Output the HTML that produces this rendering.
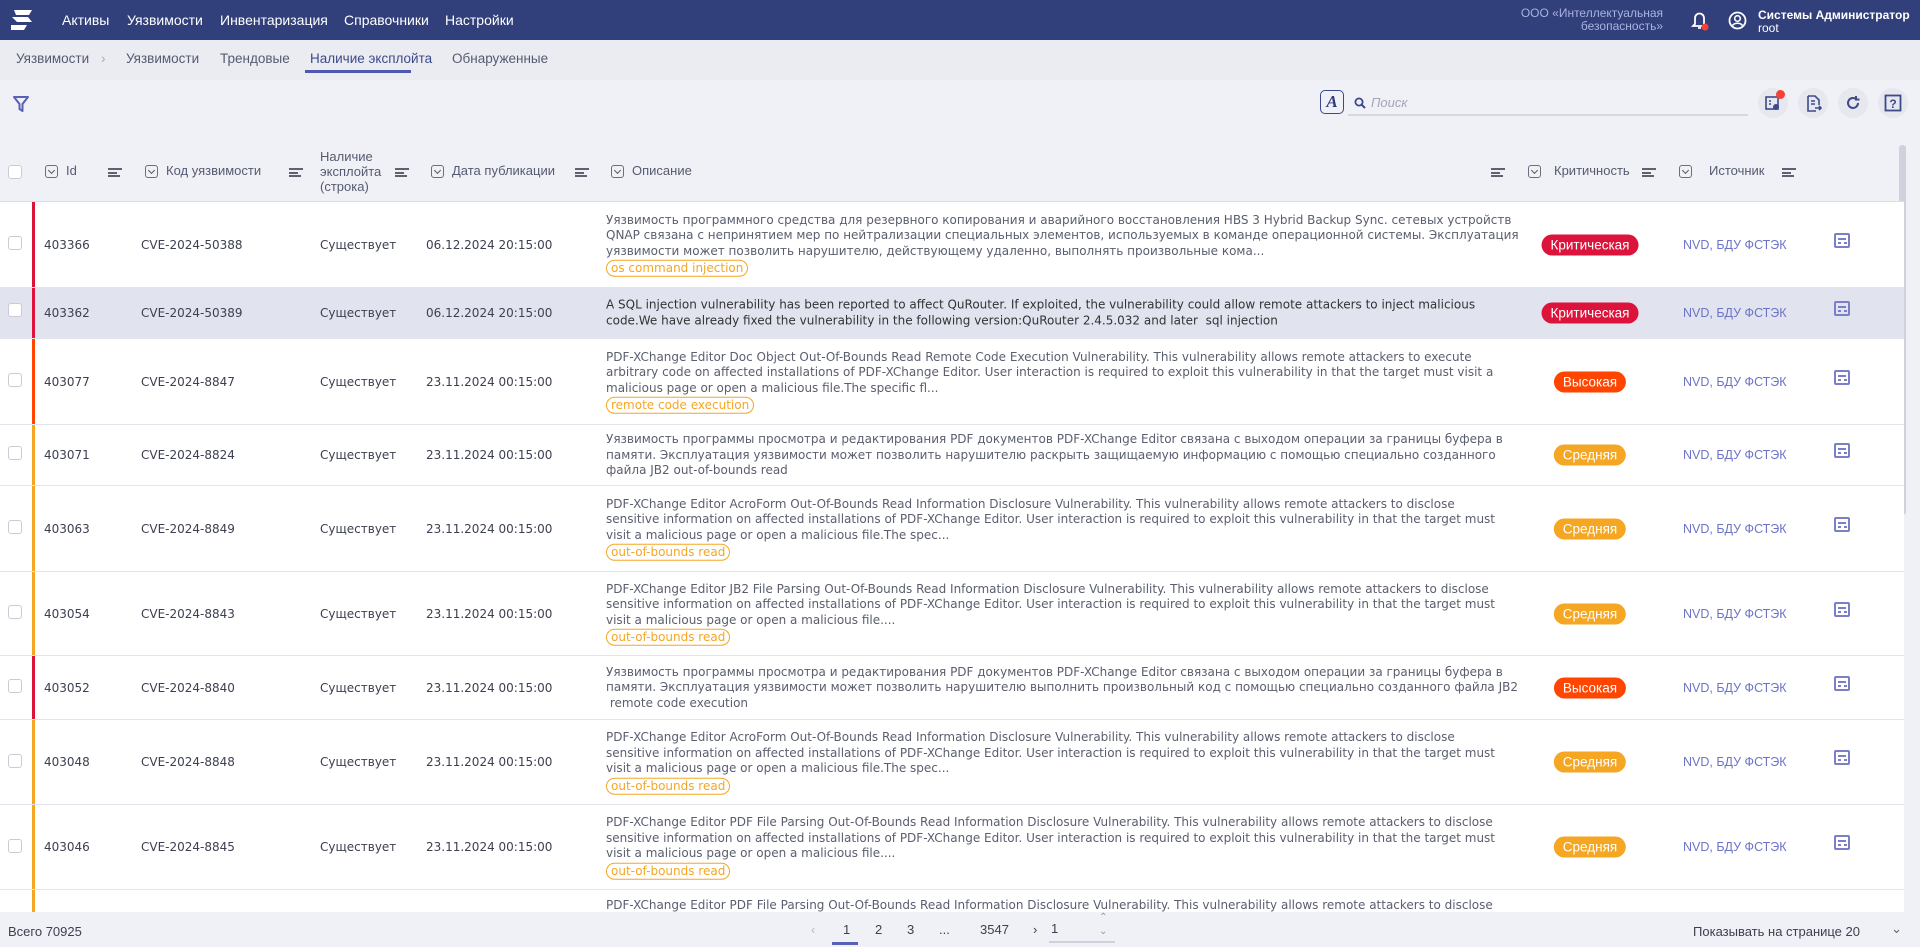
<!DOCTYPE html>
<html><head><meta charset="utf-8">
<style>
*{box-sizing:border-box;margin:0;padding:0}
body{width:1920px;height:947px;overflow:hidden;background:#f0f1f6;font-family:"DejaVu Sans","Liberation Sans",sans-serif;color:#3c4050;font-size:12px;position:relative}
.nav{position:absolute;left:0;top:0;width:1920px;height:40px;background:#313f7a;color:#fff;font-family:"Liberation Sans",sans-serif}
.nav .m{position:absolute;top:12px;font-size:14px}
.sub{position:absolute;top:40px;left:0;width:1920px;height:40px;background:#ebecf2;font-family:"Liberation Sans",sans-serif;font-size:13.5px;color:#555a70}
.sub span{position:absolute;top:11px}
.hdr{position:absolute;top:147px;left:0;width:1904px;height:55px;border-bottom:1px solid #dcdde6;font-size:13px;color:#555a70;font-family:"Liberation Sans",sans-serif}
.hdr .t{position:absolute;top:16px}
.cb{position:absolute;width:14px;height:14px;border:1px solid #c9cbd6;border-radius:3px;background:#fff}
.dd{position:absolute;width:13px;height:13px;border:1px solid #6a6e80;border-radius:3px}
.dd:after{content:"";position:absolute;left:3px;top:2px;width:4px;height:4px;border-right:1px solid #555;border-bottom:1px solid #555;transform:rotate(45deg)}
.so{position:absolute;width:14px;height:9px}
.so i{display:block;height:2px;background:#5d6170;margin-bottom:1.5px}
.row{position:absolute;left:0;width:1904px;background:#fff;border-bottom:1px solid #e3e4ec}
.row.h{background:#e1e3ef}
.row .bar{position:absolute;left:32px;top:0;bottom:0;width:3px}
.row .c{position:absolute;top:50%;transform:translateY(-50%);white-space:nowrap;font-size:12px}
.row .d{position:absolute;left:606px;top:50%;transform:translateY(-50%);white-space:nowrap;line-height:15.5px;font-size:12px;color:#5a5e6e}
.row.h .d{color:#333}
.tag{display:inline-block;border:1px solid #f5a623;color:#f5a623;border-radius:9px;padding:0 4px;line-height:15px;margin-top:1px}
.b{position:absolute;top:50%;transform:translate(-50%,-50%);color:#fff;border-radius:11px;padding:3px 9px;font-size:13.5px;font-family:"Liberation Sans",sans-serif}
.src{position:absolute;left:1683px;top:50%;transform:translateY(-50%);color:#6c74c8;font-size:12.5px;font-family:"Liberation Sans",sans-serif}
.ic{position:absolute;left:1834px;top:50%;margin-top:-12px;width:16px;height:15px;border:2px solid #7a7fc8;border-radius:2px}
.ic:before{content:"";position:absolute;left:2px;right:2px;top:3px;height:2px;background:#7a7fc8}
.ic:after{content:"";position:absolute;left:2px;width:3px;top:7px;height:2px;background:#7a7fc8;box-shadow:6px 0 #7a7fc8}
.foot{position:absolute;top:912px;left:0;width:1920px;height:35px;background:#f0f1f6;font-family:"Liberation Sans",sans-serif;font-size:13px;color:#3c4050}
.rb{position:absolute;top:88px;width:30px;height:30px;border-radius:50%;background:#e6e7ef}
</style></head><body>
<div class="nav">
<svg style="position:absolute;left:9px;top:8px" width="26" height="24" viewBox="0 0 26 24"><path d="M5 2h18l-3 5H7z M3 9h16l4 5H8z M2 17h16l-3 5H2z" fill="#fff"/></svg>
<span class="m" style="left:62px">Активы</span>
<span class="m" style="left:127px">Уязвимости</span>
<span class="m" style="left:220px">Инвентаризация</span>
<span class="m" style="left:344px">Справочники</span>
<span class="m" style="left:445px">Настройки</span>
<div style="position:absolute;right:257px;top:7px;text-align:right;color:#a9b3e0;font-size:12px;line-height:13px">ООО «Интеллектуальная<br>безопасность»</div>
<svg style="position:absolute;left:1690px;top:10px" width="20" height="22" viewBox="0 0 20 22"><path d="M5 14V8a4.5 4.5 0 019 0v6l2 2H3z M8 18h3" stroke="#fff" stroke-width="1.8" fill="none"/><circle cx="15" cy="17" r="3.5" fill="#f44336"/></svg>
<svg style="position:absolute;left:1728px;top:11px" width="19" height="19" viewBox="0 0 19 19"><circle cx="9.5" cy="9.5" r="8" stroke="#fff" stroke-width="1.8" fill="none"/><circle cx="9.5" cy="7.5" r="2.8" stroke="#fff" stroke-width="1.6" fill="none"/><path d="M4.5 14.5c2-3 8-3 10 0" stroke="#fff" stroke-width="1.6" fill="none"/></svg>
<div style="position:absolute;left:1758px;top:9px;font-size:12px;font-weight:bold;line-height:13px">Системы Администратор<br><span style="font-weight:normal">root</span></div>
</div>
<div class="sub">
<span style="left:16px">Уязвимости</span><span style="left:101px;color:#aaa">›</span>
<span style="left:126px">Уязвимости</span>
<span style="left:220px">Трендовые</span>
<span style="left:310px;color:#3d4a8a">Наличие эксплойта</span>
<div style="position:absolute;left:305px;top:30px;width:106px;height:3px;background:#4f58b0"></div>
<span style="left:452px">Обнаруженные</span>
</div>
<svg style="position:absolute;left:13px;top:96px" width="16" height="16" viewBox="0 0 16 16"><path d="M1 1h14l-5.5 7v7l-3-2V8z" stroke="#5860b8" stroke-width="2" fill="none" stroke-linejoin="round"/></svg>
<div style="position:absolute;left:1320px;top:90px;width:24px;height:24px;border:1.5px solid #3d4a8a;border-radius:5px;color:#2f3a7a;font:italic bold 17px 'Liberation Serif',serif;text-align:center;line-height:21px">A</div>
<svg style="position:absolute;left:1354px;top:97px" width="12" height="12" viewBox="0 0 12 12"><circle cx="5" cy="5" r="3.6" stroke="#3d4a8a" stroke-width="1.8" fill="none"/><path d="M7.5 7.5L11 11" stroke="#3d4a8a" stroke-width="2"/></svg>
<span style="position:absolute;left:1371px;top:95px;font:italic 13px 'Liberation Sans',sans-serif;color:#a3a6b6">Поиск</span>
<div style="position:absolute;left:1348px;top:114px;width:400px;height:2px;background:#d6d7e0"></div>
<div class="rb" style="left:1758px"></div><div class="rb" style="left:1798px"></div><div class="rb" style="left:1838px"></div><div class="rb" style="left:1878px"></div>
<svg style="position:absolute;left:1764px;top:94px" width="18" height="18" viewBox="0 0 18 18"><rect x="2" y="3" width="12" height="12" stroke="#3d4a8a" stroke-width="1.6" fill="none"/><path d="M5 7h2 M5 10h2" stroke="#3d4a8a" stroke-width="1.5"/><circle cx="12" cy="13" r="3" fill="#3d4a8a"/></svg>
<div style="position:absolute;left:1776px;top:90px;width:9px;height:9px;border-radius:50%;background:#f44336"></div>
<svg style="position:absolute;left:1805px;top:95px" width="18" height="18" viewBox="0 0 18 18"><path d="M3 1h7l4 4v5 M3 1v15h8 M6 6h4 M6 9h4 M10 13h6 M14 11l2 2-2 2" stroke="#3d4a8a" stroke-width="1.6" fill="none"/></svg>
<svg style="position:absolute;left:1845px;top:95px" width="16" height="16" viewBox="0 0 16 16"><path d="M13 8a5 5 0 11-2-4 M11 1v3.5h3.5" stroke="#3d4a8a" stroke-width="2" fill="none"/></svg>
<svg style="position:absolute;left:1884px;top:94px" width="18" height="18" viewBox="0 0 18 18"><rect x="1.5" y="1.5" width="15" height="15" stroke="#3d4a8a" stroke-width="1.8" fill="none"/><text x="9" y="14" font-size="12" font-weight="bold" text-anchor="middle" fill="#3d4a8a" font-family="Liberation Sans">?</text></svg>
<div style="position:absolute;left:1899px;top:145px;width:7px;height:370px;background:#d0d1dc;border-radius:3px"></div>

<div class="hdr">
<div class="cb" style="left:8px;top:18px"></div>
<div class="dd" style="left:45px;top:18px"></div><span class="t" style="left:66px">Id</span><div class="so" style="left:108px;top:21px"><i style="width:14px"></i><i style="width:9px"></i><i style="width:12px"></i></div>
<div class="dd" style="left:145px;top:18px"></div><span class="t" style="left:166px">Код уязвимости</span><div class="so" style="left:289px;top:21px"><i style="width:14px"></i><i style="width:9px"></i><i style="width:12px"></i></div>
<span style="position:absolute;left:320px;top:2px;line-height:15px">Наличие<br>эксплойта<br>(строка)</span><div class="so" style="left:395px;top:21px"><i style="width:14px"></i><i style="width:9px"></i><i style="width:12px"></i></div>
<div class="dd" style="left:431px;top:18px"></div><span class="t" style="left:452px">Дата публикации</span><div class="so" style="left:575px;top:21px"><i style="width:14px"></i><i style="width:9px"></i><i style="width:12px"></i></div>
<div class="dd" style="left:611px;top:18px"></div><span class="t" style="left:632px">Описание</span><div class="so" style="left:1491px;top:21px"><i style="width:14px"></i><i style="width:9px"></i><i style="width:12px"></i></div>
<div class="dd" style="left:1528px;top:18px"></div><span class="t" style="left:1554px">Критичность</span><div class="so" style="left:1642px;top:21px"><i style="width:14px"></i><i style="width:9px"></i><i style="width:12px"></i></div>
<div class="dd" style="left:1679px;top:18px"></div><span class="t" style="left:1709px">Источник</span><div class="so" style="left:1782px;top:21px"><i style="width:14px"></i><i style="width:9px"></i><i style="width:12px"></i></div>
</div>

<div class="row" style="top:202px;height:86px"><div class="cb" style="left:8px;top:34px"></div><div class="bar" style="background:#dc143c"></div>
<span class="c" style="left:44px">403366</span><span class="c" style="left:141px">CVE-2024-50388</span><span class="c" style="left:320px">Существует</span><span class="c" style="left:426px">06.12.2024 20:15:00</span>
<div class="d">Уязвимость программного средства для резервного копирования и аварийного восстановления HBS 3 Hybrid Backup Sync. сетевых устройств<br>QNAP связана с непринятием мер по нейтрализации специальных элементов, используемых в команде операционной системы. Эксплуатация<br>уязвимости может позволить нарушителю, действующему удаленно, выполнять произвольные кома...<br><span class="tag">os command injection</span></div>
<span class="b" style="left:1590px;background:#dc143c">Критическая</span><span class="src">NVD, БДУ ФСТЭК</span><div class="ic"></div></div>

<div class="row h" style="top:288px;height:51px"><div class="cb" style="left:8px;top:15px"></div><div class="bar" style="background:#dc143c"></div>
<span class="c" style="left:44px">403362</span><span class="c" style="left:141px">CVE-2024-50389</span><span class="c" style="left:320px">Существует</span><span class="c" style="left:426px">06.12.2024 20:15:00</span>
<div class="d">A SQL injection vulnerability has been reported to affect QuRouter. If exploited, the vulnerability could allow remote attackers to inject malicious<br>code.We have already fixed the vulnerability in the following version:QuRouter 2.4.5.032 and later &nbsp;sql injection</div>
<span class="b" style="left:1590px;background:#dc143c">Критическая</span><span class="src">NVD, БДУ ФСТЭК</span><div class="ic"></div></div>

<div class="row" style="top:339px;height:86px"><div class="cb" style="left:8px;top:34px"></div><div class="bar" style="background:#ff4500"></div>
<span class="c" style="left:44px">403077</span><span class="c" style="left:141px">CVE-2024-8847</span><span class="c" style="left:320px">Существует</span><span class="c" style="left:426px">23.11.2024 00:15:00</span>
<div class="d">PDF-XChange Editor Doc Object Out-Of-Bounds Read Remote Code Execution Vulnerability. This vulnerability allows remote attackers to execute<br>arbitrary code on affected installations of PDF-XChange Editor. User interaction is required to exploit this vulnerability in that the target must visit a<br>malicious page or open a malicious file.The specific fl...<br><span class="tag">remote code execution</span></div>
<span class="b" style="left:1590px;background:#ff4500">Высокая</span><span class="src">NVD, БДУ ФСТЭК</span><div class="ic"></div></div>

<div class="row" style="top:425px;height:61px"><div class="cb" style="left:8px;top:21px"></div><div class="bar" style="background:#f5a623"></div>
<span class="c" style="left:44px">403071</span><span class="c" style="left:141px">CVE-2024-8824</span><span class="c" style="left:320px">Существует</span><span class="c" style="left:426px">23.11.2024 00:15:00</span>
<div class="d">Уязвимость программы просмотра и редактирования PDF документов PDF-XChange Editor связана с выходом операции за границы буфера в<br>памяти. Эксплуатация уязвимости может позволить нарушителю раскрыть защищаемую информацию с помощью специально созданного<br>файла JB2 out-of-bounds read</div>
<span class="b" style="left:1590px;background:#f5a623">Средняя</span><span class="src">NVD, БДУ ФСТЭК</span><div class="ic"></div></div>

<div class="row" style="top:486px;height:86px"><div class="cb" style="left:8px;top:34px"></div><div class="bar" style="background:#f5a623"></div>
<span class="c" style="left:44px">403063</span><span class="c" style="left:141px">CVE-2024-8849</span><span class="c" style="left:320px">Существует</span><span class="c" style="left:426px">23.11.2024 00:15:00</span>
<div class="d">PDF-XChange Editor AcroForm Out-Of-Bounds Read Information Disclosure Vulnerability. This vulnerability allows remote attackers to disclose<br>sensitive information on affected installations of PDF-XChange Editor. User interaction is required to exploit this vulnerability in that the target must<br>visit a malicious page or open a malicious file.The spec...<br><span class="tag">out-of-bounds read</span></div>
<span class="b" style="left:1590px;background:#f5a623">Средняя</span><span class="src">NVD, БДУ ФСТЭК</span><div class="ic"></div></div>

<div class="row" style="top:572px;height:84px"><div class="cb" style="left:8px;top:33px"></div><div class="bar" style="background:#f5a623"></div>
<span class="c" style="left:44px">403054</span><span class="c" style="left:141px">CVE-2024-8843</span><span class="c" style="left:320px">Существует</span><span class="c" style="left:426px">23.11.2024 00:15:00</span>
<div class="d">PDF-XChange Editor JB2 File Parsing Out-Of-Bounds Read Information Disclosure Vulnerability. This vulnerability allows remote attackers to disclose<br>sensitive information on affected installations of PDF-XChange Editor. User interaction is required to exploit this vulnerability in that the target must<br>visit a malicious page or open a malicious file....<br><span class="tag">out-of-bounds read</span></div>
<span class="b" style="left:1590px;background:#f5a623">Средняя</span><span class="src">NVD, БДУ ФСТЭК</span><div class="ic"></div></div>

<div class="row" style="top:656px;height:64px"><div class="cb" style="left:8px;top:23px"></div><div class="bar" style="background:#dc143c"></div>
<span class="c" style="left:44px">403052</span><span class="c" style="left:141px">CVE-2024-8840</span><span class="c" style="left:320px">Существует</span><span class="c" style="left:426px">23.11.2024 00:15:00</span>
<div class="d">Уязвимость программы просмотра и редактирования PDF документов PDF-XChange Editor связана с выходом операции за границы буфера в<br>памяти. Эксплуатация уязвимости может позволить нарушителю выполнить произвольный код с помощью специально созданного файла JB2<br>&nbsp;remote code execution</div>
<span class="b" style="left:1590px;background:#ff4500">Высокая</span><span class="src">NVD, БДУ ФСТЭК</span><div class="ic"></div></div>

<div class="row" style="top:720px;height:85px"><div class="cb" style="left:8px;top:34px"></div><div class="bar" style="background:#f5a623"></div>
<span class="c" style="left:44px">403048</span><span class="c" style="left:141px">CVE-2024-8848</span><span class="c" style="left:320px">Существует</span><span class="c" style="left:426px">23.11.2024 00:15:00</span>
<div class="d">PDF-XChange Editor AcroForm Out-Of-Bounds Read Information Disclosure Vulnerability. This vulnerability allows remote attackers to disclose<br>sensitive information on affected installations of PDF-XChange Editor. User interaction is required to exploit this vulnerability in that the target must<br>visit a malicious page or open a malicious file.The spec...<br><span class="tag">out-of-bounds read</span></div>
<span class="b" style="left:1590px;background:#f5a623">Средняя</span><span class="src">NVD, БДУ ФСТЭК</span><div class="ic"></div></div>

<div class="row" style="top:805px;height:85px"><div class="cb" style="left:8px;top:34px"></div><div class="bar" style="background:#f5a623"></div>
<span class="c" style="left:44px">403046</span><span class="c" style="left:141px">CVE-2024-8845</span><span class="c" style="left:320px">Существует</span><span class="c" style="left:426px">23.11.2024 00:15:00</span>
<div class="d">PDF-XChange Editor PDF File Parsing Out-Of-Bounds Read Information Disclosure Vulnerability. This vulnerability allows remote attackers to disclose<br>sensitive information on affected installations of PDF-XChange Editor. User interaction is required to exploit this vulnerability in that the target must<br>visit a malicious page or open a malicious file....<br><span class="tag">out-of-bounds read</span></div>
<span class="b" style="left:1590px;background:#f5a623">Средняя</span><span class="src">NVD, БДУ ФСТЭК</span><div class="ic"></div></div>

<div class="row" style="top:890px;height:22px;overflow:hidden;border-bottom:none"><div class="bar" style="background:#f5a623"></div>
<div style="position:absolute;left:606px;top:8px;white-space:nowrap;font-size:12px;color:#5a5e6e">PDF-XChange Editor PDF File Parsing Out-Of-Bounds Read Information Disclosure Vulnerability. This vulnerability allows remote attackers to disclose</div></div>

<div class="foot">
<span style="position:absolute;left:8px;top:12px">Всего 70925</span>
<span style="position:absolute;left:811px;top:10px;color:#bbb">‹</span>
<span style="position:absolute;left:843px;top:10px">1</span>
<div style="position:absolute;left:832px;top:30px;width:26px;height:3px;background:#5860b8"></div>
<span style="position:absolute;left:875px;top:10px">2</span>
<span style="position:absolute;left:907px;top:10px">3</span>
<span style="position:absolute;left:939px;top:10px">...</span>
<span style="position:absolute;left:980px;top:10px">3547</span>
<span style="position:absolute;left:1033px;top:10px">›</span>
<span style="position:absolute;left:1051px;top:9px">1</span>
<div style="position:absolute;left:1049px;top:29px;width:66px;height:2px;background:#d0d1dc"></div>
<span style="position:absolute;left:1099px;top:0;font-size:10px;color:#999">⌃</span><span style="position:absolute;left:1099px;top:14px;font-size:10px;color:#999">⌄</span>
<span style="position:absolute;right:60px;top:12px">Показывать на странице 20</span>
<span style="position:absolute;right:18px;top:9px;color:#666">⌄</span>
</div>
</body></html>
